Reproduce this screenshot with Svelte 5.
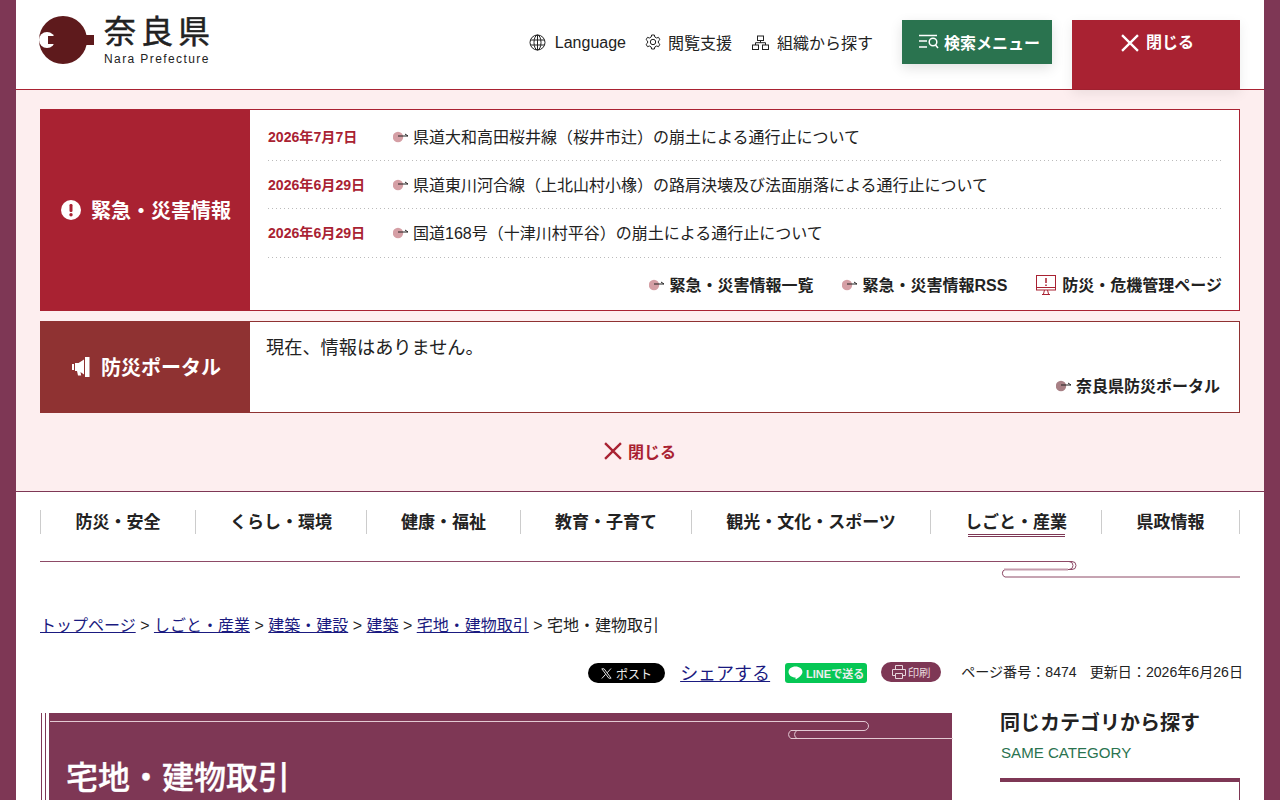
<script>
  // Alert rows
  const alerts = [
    { date: '2026年7月7日', text: '県道大和高田桜井線（桜井市辻）の崩土による通行止について' },
    { date: '2026年6月29日', text: '県道東川河合線（上北山村小橡）の路肩決壊及び法面崩落による通行止について' },
    { date: '2026年6月29日', text: '国道168号（十津川村平谷）の崩土による通行止について' }
  ];

  const navItems = ['防災・安全', 'くらし・環境', '健康・福祉', '教育・子育て', '観光・文化・スポーツ', 'しごと・産業', '県政情報'];
  const crumbs = ['しごと・産業', '建築・建設', '建築', '宅地・建物取引'];
</script>

{#snippet bullet(cls)}
  <svg class="bullet {cls}" width="16" height="12" viewBox="0 0 16 12" aria-hidden="true">
    <circle class="dot" cx="5" cy="6" r="5.200" />
    <path d="M5 5h10l-3-2" fill="none" stroke="#222" stroke-width="1" />
  </svg>
{/snippet}

<div class="page">
  <header class="site-header">
    <a class="logo" href="#top">
      <svg width="56" height="48" viewBox="0 0 56 48" aria-hidden="true">
        <circle cx="24" cy="24" r="24" fill="#5e1a1c" />
        <rect x="44" y="19" width="11" height="10" fill="#5e1a1c" />
        <circle cx="8" cy="24" r="8" fill="#fff" />
        <rect x="9" y="20" width="8" height="8" fill="#5e1a1c" />
      </svg>
      <span class="logo-text">
        <span class="logo-ja">奈良県</span>
        <span class="logo-en">Nara Prefecture</span>
      </span>
    </a>

    <nav class="tools">
      <a href="#top" class="tool">
        <svg width="17" height="17" viewBox="0 0 17 17" fill="none" stroke="#222" stroke-width="1">
          <circle cx="8.500" cy="8.500" r="7.500" />
          <ellipse cx="8.500" cy="8.500" rx="3.500" ry="7.500" />
          <path d="M8.500 1v15M1.500 6h14M1.500 11h14" />
        </svg>
        <span class="tool-lang">Language</span>
      </a>
      <a href="#top" class="tool tool-support">
        <svg width="16" height="16" viewBox="0 0 16 16" fill="none" stroke="#222" stroke-width="1">
          <path d="M6.600 1h2.800l.4 2 1.800 1 1.900-.7 1.400 2.400-1.500 1.300v2l1.500 1.300-1.400 2.400-1.900-.7-1.800 1-.4 2H6.600l-.4-2-1.800-1-1.900.7-1.400-2.400L2.600 9V7L1.100 5.700l1.400-2.400 1.900.7 1.800-1z" />
          <circle cx="8" cy="8" r="2.700" />
        </svg>
        <span>閲覧支援</span>
      </a>
      <a href="#top" class="tool tool-org">
        <svg width="17" height="15" viewBox="0 0 17 15" fill="none" stroke="#222" stroke-width="1">
          <rect x="5.500" y="1" width="6" height="4.500" />
          <rect x="0.500" y="10" width="6" height="4.500" />
          <rect x="10.500" y="10" width="6" height="4.500" />
          <path d="M3.500 10V7.700h10V10M8.500 5.500v2.200" />
        </svg>
        <span>組織から探す</span>
      </a>
    </nav>

    <button class="btn-search" type="button">
      <svg width="20" height="16" viewBox="0 0 20 16" fill="none" stroke="#fff" stroke-width="1.500">
        <path d="M0 1.500h18M0 7h8M0 13h8" />
        <circle cx="14" cy="8" r="3.800" />
        <path d="M16.500 11l2.500 3" />
      </svg>
      検索メニュー
    </button>
    <button class="btn-close" type="button">
      <svg width="18" height="18" viewBox="0 0 17 17" stroke="#fff" stroke-width="2.200">
        <path d="M1 1l15 15M16 1L1 16" />
      </svg>
      閉じる
    </button>
  </header>

  <section class="emergency">
    <div class="box box-alert">
      <h2 class="box-title title-alert">
        <svg width="20" height="20" viewBox="0 0 20 20" aria-hidden="true">
          <circle cx="10" cy="10" r="10" fill="#fff" />
          <rect x="8.500" y="4" width="3" height="8" rx="1.200" fill="#a92232" />
          <circle cx="10" cy="14.800" r="1.700" fill="#a92232" />
        </svg>
        緊急・災害情報
      </h2>
      <div class="box-body">
        <ul class="alert-list">
          {#each alerts as item}
            <li class="alert-row">
              <span class="alert-date">{item.date}</span>
              {@render bullet('pink')}
              <a href="#top">{item.text}</a>
            </li>
          {/each}
        </ul>
        <div class="alert-links">
          <a href="#top">{@render bullet('pink')}緊急・災害情報一覧</a>
          <a href="#top">{@render bullet('pink')}緊急・災害情報RSS</a>
          <a href="#top" class="link-monitor">
            <svg width="20" height="20" viewBox="0 0 20 20" fill="none" stroke="#a92232" stroke-width="1">
              <rect x="0.500" y="0.500" width="19" height="14.500" />
              <path d="M0.500 12.500h19M8.500 15l-1 4M11.500 15l1 4M6 19.500h8" />
              <path d="M10 3v5M10 9.500v1.500" stroke-width="1.500" />
            </svg>
            防災・危機管理ページ
          </a>
        </div>
      </div>
    </div>

    <div class="box box-portal">
      <h2 class="box-title title-portal">
        <svg width="18" height="20" viewBox="0 0 18 20" fill="#fff" aria-hidden="true">
          <path d="M0 7h2v6H0zM3 6h3.500L12 2.500V17.500L8.500 15l.7 3.500H6L5 14H3zM13 0h4.500v20H13z" />
        </svg>
        防災ポータル
      </h2>
      <div class="box-body portal-body">
        <p>現在、情報はありません。</p>
        <div class="portal-link">
          <a href="#top">{@render bullet('mauve')}奈良県防災ポータル</a>
        </div>
      </div>
    </div>

    <button class="panel-close" type="button">
      <svg width="18" height="18" viewBox="0 0 17 17" stroke="#a92232" stroke-width="2.200">
        <path d="M1 1l15 15M16 1L1 16" />
      </svg>
      閉じる
    </button>
  </section>

  <nav class="global-nav">
    {#each navItems as item}
      <a href="#top" class="nav-item">
        <span class:current={item === 'しごと・産業'}>{item}</span>
      </a>
    {/each}
  </nav>

  <svg class="nav-rule" width="1200" height="18" viewBox="0 0 1200 18" fill="none" stroke="#8d4a66" stroke-width="1">
    <path d="M0 .5H1032a4 4 0 0 1 0 8H1028" />
    <path d="M1029 .5a4 4 0 0 1 0 8" />
    <path d="M1028 8.500H965a4 4 0 0 0 0 7.500H1200" />
    <path d="M964 8.500H1028" stroke="#c49bac" stroke-width="2" />
  </svg>

  <p class="breadcrumb">
    <a href="#top">トップページ</a>
    {#each crumbs as crumb}
      &gt; <a href="#top">{crumb}</a>{' '}
    {/each}
    &gt; 宅地・建物取引
  </p>

  <div class="share-row">
    <a href="#top" class="btn-x">
      <svg width="11" height="11" viewBox="0 0 11 11" fill="none" stroke="#ddd" stroke-width="1">
        <path d="M.8.800h2.300l7 9.400H7.800zM10 .500L6.200 4.800M4.700 6.200L.8 10.500" />
      </svg>
      ポスト
    </a>
    <a href="#top" class="share-link">シェアする</a>
    <a href="#top" class="btn-line">
      <svg width="15" height="14" viewBox="0 0 14 13" aria-hidden="true">
        <path d="M7 .5c3.600 0 6.500 2.200 6.500 5 0 2.500-3.200 5.200-6 6.800-.6.300-.5-.6-.4-1.500C3.200 10.600.5 8.300.5 5.500c0-2.800 2.900-5 6.500-5z" fill="#fff" />
      </svg>
      LINEで送る
    </a>
    <button type="button" class="btn-print">
      <svg width="14" height="14" viewBox="0 0 14 14" fill="none" stroke="#e6d5dc" stroke-width="1">
        <path d="M3.500 4V.5h7V4M3.500 10.500h-3V4.500h13v6h-3M3.500 8.500h7v5h-7z" />
      </svg>
      印刷
    </button>
    <span class="page-meta meta-first">ページ番号：8474</span>
    <span class="page-meta">更新日：2026年6月26日</span>
  </div>

  <div class="columns">
    <main class="main-col">
      <div class="title-block">
        <svg class="title-deco" width="903" height="30" viewBox="0 0 903 30" fill="none" stroke="#e3c9d3" stroke-width="1">
          <path d="M0 8.500H814a4.500 4.500 0 0 1 0 9H747" />
          <path d="M747 17.500a4.500 4.500 0 0 0 0 8H903" />
          <path d="M747 17.500h-6a4.500 4.500 0 0 0 0 8h6" />
        </svg>
        <h1>宅地・建物取引</h1>
      </div>
    </main>
    <aside class="side-col">
      <h2>同じカテゴリから探す</h2>
      <p class="side-en">SAME CATEGORY</p>
      <div class="side-box"></div>
    </aside>
  </div>
</div>

<style>
  :global(html), :global(body) {
    height: 800px;
    overflow: hidden;
  }

  :global(body) {
    background: #7e3755;
    font-family: "Liberation Sans", "Noto Sans CJK JP", sans-serif;
    color: #222;
  }

  a {
    color: inherit;
    text-decoration: none;
  }

  button {
    font: inherit;
    border: none;
    cursor: pointer;
  }

  h1, h2, p, ul {
    margin: 0;
    padding: 0;
  }

  .page {
    margin: 0 16px;
    height: 800px;
    overflow: hidden;
    background: #fff;
  }

  /* Header */
  .site-header {
    display: flex;
    align-items: flex-start;
    height: 89px;
    padding: 0 24px;
    border-bottom: 1px solid #a92232;
  }

  .logo {
    display: flex;
    align-items: flex-start;
    gap: 9px;
    margin-top: 16px;
    margin-left: -1px;
    margin-right: auto;
  }

  .logo-text {
    display: flex;
    flex-direction: column;
    margin-top: -4px;
  }

  .logo-ja {
    font-size: 32px;
    line-height: 40px;
    letter-spacing: 5px;
    -webkit-text-stroke: 0.5px #222;
  }

  .logo-en {
    margin-top: -1px;
    font-size: 12px;
    line-height: 16px;
    letter-spacing: 1.400px;
  }

  .tools {
    display: flex;
    align-items: center;
    height: 44px;
    margin-top: 20px;
    margin-right: 29px;
    font-size: 16px;
  }

  .tool {
    display: flex;
    align-items: center;
    gap: 7px;
  }

  .tool-lang {
    margin-left: 2px;
    margin-top: 2px;
  }

  .tool-support {
    margin-left: 19px;
  }

  .tool-org {
    margin-left: 20px;
    gap: 8px;
  }

  .btn-search {
    display: flex;
    align-items: center;
    justify-content: center;
    gap: 5px;
    box-sizing: border-box;
    width: 150px;
    height: 44px;
    margin-top: 20px;
    padding: 0 0 0 5px;
    background: #2a734f;
    color: #fff;
    font-weight: 700;
    font-size: 16px;
    box-shadow: 0 4px 12px rgba(0, 0, 0, 0.12);
  }

  .btn-close {
    display: flex;
    align-items: flex-start;
    justify-content: center;
    gap: 7px;
    box-sizing: border-box;
    width: 168px;
    height: 69px;
    margin-top: 20px;
    margin-left: 20px;
    padding: 12px 0 0 3px;
    background: #a92232;
    color: #fff;
    font-weight: 700;
    font-size: 16px;
    line-height: 22px;
    box-shadow: 0 4px 12px rgba(0, 0, 0, 0.08);
  }

  .btn-close svg {
    margin-top: 2px;
  }

  /* Emergency panel */
  .emergency {
    display: flex;
    flex-direction: column;
    gap: 10px;
    height: 382px;
    padding: 19px 24px 0;
    background: #fdeeef;
    border-bottom: 1px solid #7e3755;
  }

  .box {
    display: flex;
    background: #fff;
    border: 1px solid #a92232;
  }

  .box-portal {
    border-color: #8f3232;
  }

  .box-title {
    display: flex;
    align-items: center;
    justify-content: center;
    gap: 10px;
    box-sizing: border-box;
    flex: 0 0 210px;
    margin: -1px 0 -1px -1px;
    padding-bottom: 2px;
    color: #fff;
    font-size: 20px;
    font-weight: 700;
  }

  .box-title svg {
    margin-top: 2px;
  }

  .title-alert {
    padding-left: 2px;
    background: #a92232;
  }

  .title-portal {
    gap: 11px;
    padding-left: 3px;
    background: #8f3232;
  }

  .box-body {
    flex: 1;
    padding: 0 18px;
    min-width: 0;
  }

  .alert-list {
    list-style: none;
  }

  .alert-row {
    display: flex;
    align-items: center;
    box-sizing: border-box;
    height: 48px;
    font-size: 16px;
    background: linear-gradient(to right, #bbb 1px, transparent 1px) left bottom / 4px 1px repeat-x;
  }

  .alert-row:first-child {
    height: 51px;
    padding-top: 3px;
  }

  .alert-row:last-child {
    height: 49px;
    padding-bottom: 1px;
  }

  .alert-row a, .alert-date {
    padding-bottom: 2px;
  }

  .alert-date {
    flex: 0 0 125px;
    color: #a92232;
    font-size: 14.100px;
    font-weight: 700;
  }

  .bullet {
    flex: none;
    margin-right: 4px;
  }

  .alert-links .bullet, .portal-link .bullet, .link-monitor svg {
    margin-top: 2px;
  }

  .pink .dot {
    fill: #d59fa5;
  }

  .mauve .dot {
    fill: #a88085;
  }

  .alert-links {
    display: flex;
    justify-content: flex-end;
    align-items: center;
    gap: 29px;
    height: 52px;
    margin-right: -1px;
    font-size: 16px;
    font-weight: 700;
  }

  .alert-links a, .portal-link a {
    display: flex;
    align-items: center;
  }

  .link-monitor {
    gap: 6px;
  }

  .portal-body {
    display: flex;
    flex-direction: column;
    height: 90px;
    padding-left: 16px;
    padding-right: 19px;
  }

  .portal-body p {
    margin-top: 13px;
    font-size: 18.200px;
    line-height: 26px;
  }

  .portal-link {
    display: flex;
    justify-content: flex-end;
    margin-top: 12px;
    font-size: 16px;
    font-weight: 700;
  }

  .panel-close {
    display: flex;
    align-items: center;
    justify-content: center;
    gap: 6px;
    height: 24px;
    margin-top: 16px;
    background: none;
    color: #a92232;
    font-size: 16px;
    font-weight: 700;
  }

  /* Global navigation */
  .global-nav {
    display: grid;
    grid-template-columns: 155px 171px 154px 171px 239px 171px 1fr;
    margin: 18px 24px 0;
    border-right: 1px solid #ccc;
  }

  .nav-item {
    height: 24px;
    line-height: 26px;
    text-align: center;
    font-size: 17px;
    font-weight: 700;
    border-left: 1px solid #ccc;
  }

  .nav-item .current {
    position: relative;
    display: inline-block;
  }

  .nav-item .current::after {
    content: "";
    position: absolute;
    left: 3px;
    right: 2px;
    top: 24px;
    height: 1px;
    border-top: 1px solid #7e3755;
    border-bottom: 1px solid #7e3755;
  }

  .nav-rule {
    display: block;
    margin: 27px 24px 0;
  }

  .breadcrumb {
    margin: 35px 24px 0;
    font-size: 16px;
    line-height: 24px;
  }

  .breadcrumb a, .share-link {
    color: #1a1a80;
    text-decoration: underline;
  }

  /* Share row */
  .share-row {
    display: flex;
    align-items: center;
    height: 24px;
    margin: 23px 21px 0 0;
    justify-content: flex-end;
    white-space: nowrap;
  }

  .btn-x {
    display: flex;
    align-items: center;
    justify-content: center;
    gap: 4px;
    width: 77px;
    height: 20px;
    border-radius: 10px;
    background: #000;
    color: #eee;
    font-size: 12px;
  }

  .share-link {
    margin-left: 15px;
    margin-top: -2px;
    font-size: 18px;
  }

  .btn-line {
    display: flex;
    align-items: center;
    justify-content: center;
    gap: 3px;
    width: 82px;
    height: 20px;
    margin-left: 15px;
    border-radius: 3px;
    background: #06c755;
    color: #eee;
    font-size: 11px;
    font-weight: 700;
  }

  .btn-print {
    display: flex;
    align-items: center;
    justify-content: center;
    gap: 2px;
    width: 60px;
    height: 20px;
    margin-left: 14px;
    margin-top: -2px;
    padding: 0;
    border-radius: 10px;
    background: #7e3755;
    color: #e6d5dc;
    font-size: 11.500px;
  }

  .page-meta {
    margin-left: 13px;
    margin-top: -4px;
    font-size: 14.080px;
  }

  .meta-first {
    margin-left: 20px;
  }

  /* Content columns */
  .columns {
    display: flex;
    justify-content: space-between;
    margin: 28px 24px 0;
  }

  .main-col {
    width: 912px;
  }

  .title-block {
    position: relative;
    height: 200px;
    margin-left: 1px;
    background: linear-gradient(to right, #7e3755 1px, #fff 1px, #fff 4px, #7e3755 4px, #7e3755 5px, #fff 5px, #fff 8px, #7e3755 8px);
  }

  .title-deco {
    position: absolute;
    top: 0;
    left: 9px;
  }

  .title-block h1 {
    padding: 44px 0 0 25px;
    color: #fff;
    font-size: 32px;
    line-height: 42px;
    font-weight: 500;
    -webkit-text-stroke: 0.3px #fff;
  }

  .side-col {
    width: 240px;
  }

  .side-col h2 {
    margin-top: 1px;
    font-size: 20px;
    line-height: 18px;
    font-weight: 700;
  }

  .side-en {
    margin-top: 11px;
    margin-left: 1px;
    color: #2a734f;
    font-size: 15.100px;
    line-height: 20px;
  }

  .side-box {
    height: 200px;
    margin-top: 15px;
    border-top: 4px solid #7e3755;
    border-right: 1px solid #7e3755;
  }
</style>
